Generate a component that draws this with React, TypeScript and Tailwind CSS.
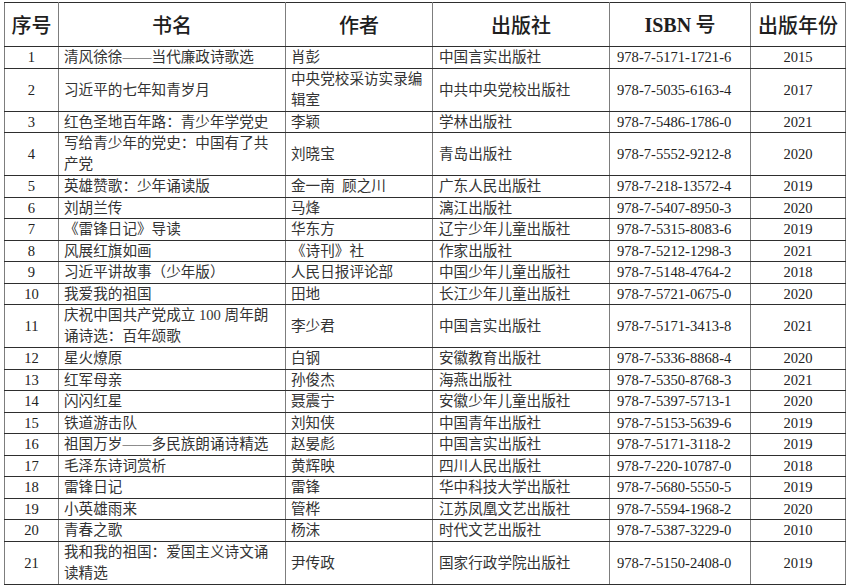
import React from "react";

type Row = { n: string; name: string[]; author: string[]; pub: string; isbn: string; year: string };

const rows: Row[] = [
  { n: "1", name: ["清风徐徐——当代廉政诗歌选"], author: ["肖彭"], pub: "中国言实出版社", isbn: "978-7-5171-1721-6", year: "2015" },
  { n: "2", name: ["习近平的七年知青岁月"], author: ["中央党校采访实录编", "辑室"], pub: "中共中央党校出版社", isbn: "978-7-5035-6163-4", year: "2017" },
  { n: "3", name: ["红色圣地百年路：青少年学党史"], author: ["李颖"], pub: "学林出版社", isbn: "978-7-5486-1786-0", year: "2021" },
  { n: "4", name: ["写给青少年的党史：中国有了共", "产党"], author: ["刘晓宝"], pub: "青岛出版社", isbn: "978-7-5552-9212-8", year: "2020" },
  { n: "5", name: ["英雄赞歌：少年诵读版"], author: ["金一南  顾之川"], pub: "广东人民出版社", isbn: "978-7-218-13572-4", year: "2019" },
  { n: "6", name: ["刘胡兰传"], author: ["马烽"], pub: "漓江出版社", isbn: "978-7-5407-8950-3", year: "2020" },
  { n: "7", name: ["《雷锋日记》导读"], author: ["华东方"], pub: "辽宁少年儿童出版社", isbn: "978-7-5315-8083-6", year: "2019" },
  { n: "8", name: ["风展红旗如画"], author: ["《诗刊》社"], pub: "作家出版社", isbn: "978-7-5212-1298-3", year: "2021" },
  { n: "9", name: ["习近平讲故事（少年版）"], author: ["人民日报评论部"], pub: "中国少年儿童出版社", isbn: "978-7-5148-4764-2", year: "2018" },
  { n: "10", name: ["我爱我的祖国"], author: ["田地"], pub: "长江少年儿童出版社", isbn: "978-7-5721-0675-0", year: "2020" },
  { n: "11", name: ["庆祝中国共产党成立 100 周年朗", "诵诗选：百年颂歌"], author: ["李少君"], pub: "中国言实出版社", isbn: "978-7-5171-3413-8", year: "2021" },
  { n: "12", name: ["星火燎原"], author: ["白钢"], pub: "安徽教育出版社", isbn: "978-7-5336-8868-4", year: "2020" },
  { n: "13", name: ["红军母亲"], author: ["孙俊杰"], pub: "海燕出版社", isbn: "978-7-5350-8768-3", year: "2021" },
  { n: "14", name: ["闪闪红星"], author: ["聂震宁"], pub: "安徽少年儿童出版社", isbn: "978-7-5397-5713-1", year: "2020" },
  { n: "15", name: ["铁道游击队"], author: ["刘知侠"], pub: "中国青年出版社", isbn: "978-7-5153-5639-6", year: "2019" },
  { n: "16", name: ["祖国万岁——多民族朗诵诗精选"], author: ["赵晏彪"], pub: "中国言实出版社", isbn: "978-7-5171-3118-2", year: "2019" },
  { n: "17", name: ["毛泽东诗词赏析"], author: ["黄辉映"], pub: "四川人民出版社", isbn: "978-7-220-10787-0", year: "2018" },
  { n: "18", name: ["雷锋日记"], author: ["雷锋"], pub: "华中科技大学出版社", isbn: "978-7-5680-5550-5", year: "2019" },
  { n: "19", name: ["小英雄雨来"], author: ["管桦"], pub: "江苏凤凰文艺出版社", isbn: "978-7-5594-1968-2", year: "2020" },
  { n: "20", name: ["青春之歌"], author: ["杨沫"], pub: "时代文艺出版社", isbn: "978-7-5387-3229-0", year: "2010" },
  { n: "21", name: ["我和我的祖国：爱国主义诗文诵", "读精选"], author: ["尹传政"], pub: "国家行政学院出版社", isbn: "978-7-5150-2408-0", year: "2019" },
];

const cell =
  "border-x-[1.5px] border-x-[#7d7d7d] border-y-[1.5px] border-y-[#2e2e2e] p-0 align-middle whitespace-pre leading-[16px]";
const th =
  "border-x-[1.5px] border-x-[#7d7d7d] border-y-[1.5px] border-y-[#2e2e2e] p-0 align-middle text-center font-medium text-[20px] leading-[24px] text-[#1e1e1e]";

function Lines({ lines }: { lines: string[] }) {
  if (lines.length === 1) return <div className="leading-[16px]">{lines[0]}</div>;
  return (
    <>
      {lines.map((l, i) => (
        <div key={i} className="leading-[21px]">
          {l}
        </div>
      ))}
    </>
  );
}

export default function App() {
  return (
    <div className="w-[850px] h-[587px] bg-white pt-[2px] pl-[4px]">
      <table
        className="table-fixed border-collapse w-[841px] text-[#333333] text-[14.6px]"
        style={{ fontFamily: "'Liberation Serif', 'Noto Sans CJK SC', serif" }}
      >
        <colgroup>
          <col className="w-[54px]" />
          <col className="w-[227px]" />
          <col className="w-[147px]" />
          <col className="w-[177px]" />
          <col className="w-[141px]" />
          <col className="w-[95px]" />
        </colgroup>
        <thead>
          <tr className="h-[44px]" style={{ fontFamily: "'Noto Sans CJK SC', sans-serif" }}>
            <th className={th + " font-bold"}>序号</th>
            <th className={th}>书名</th>
            <th className={th}>作者</th>
            <th className={th}>出版社</th>
            <th className={th}>
              <span className="font-bold" style={{ fontFamily: "'Liberation Serif', serif" }}>
                ISBN
              </span>{" "}
              号
            </th>
            <th className={th}>出版年份</th>
          </tr>
        </thead>
        <tbody>
          {rows.map((r) => {
            const dbl = r.name.length > 1 || r.author.length > 1;
            return (
              <tr key={r.n} className={dbl ? "h-[43px]" : "h-[21.5px]"}>
                <td className={cell + " text-center text-[#222222]"}>{r.n}</td>
                <td className={cell + " pl-[5px]"}>
                  <Lines lines={r.name} />
                </td>
                <td className={cell + " pl-[5px]"}>
                  <Lines lines={r.author} />
                </td>
                <td className={cell + " pl-[6px]"}>{r.pub}</td>
                <td className={cell + " pl-[7px] text-[#222222]"}>{r.isbn}</td>
                <td className={cell + " text-center text-[#222222]"}>{r.year}</td>
              </tr>
            );
          })}
        </tbody>
      </table>
    </div>
  );
}
